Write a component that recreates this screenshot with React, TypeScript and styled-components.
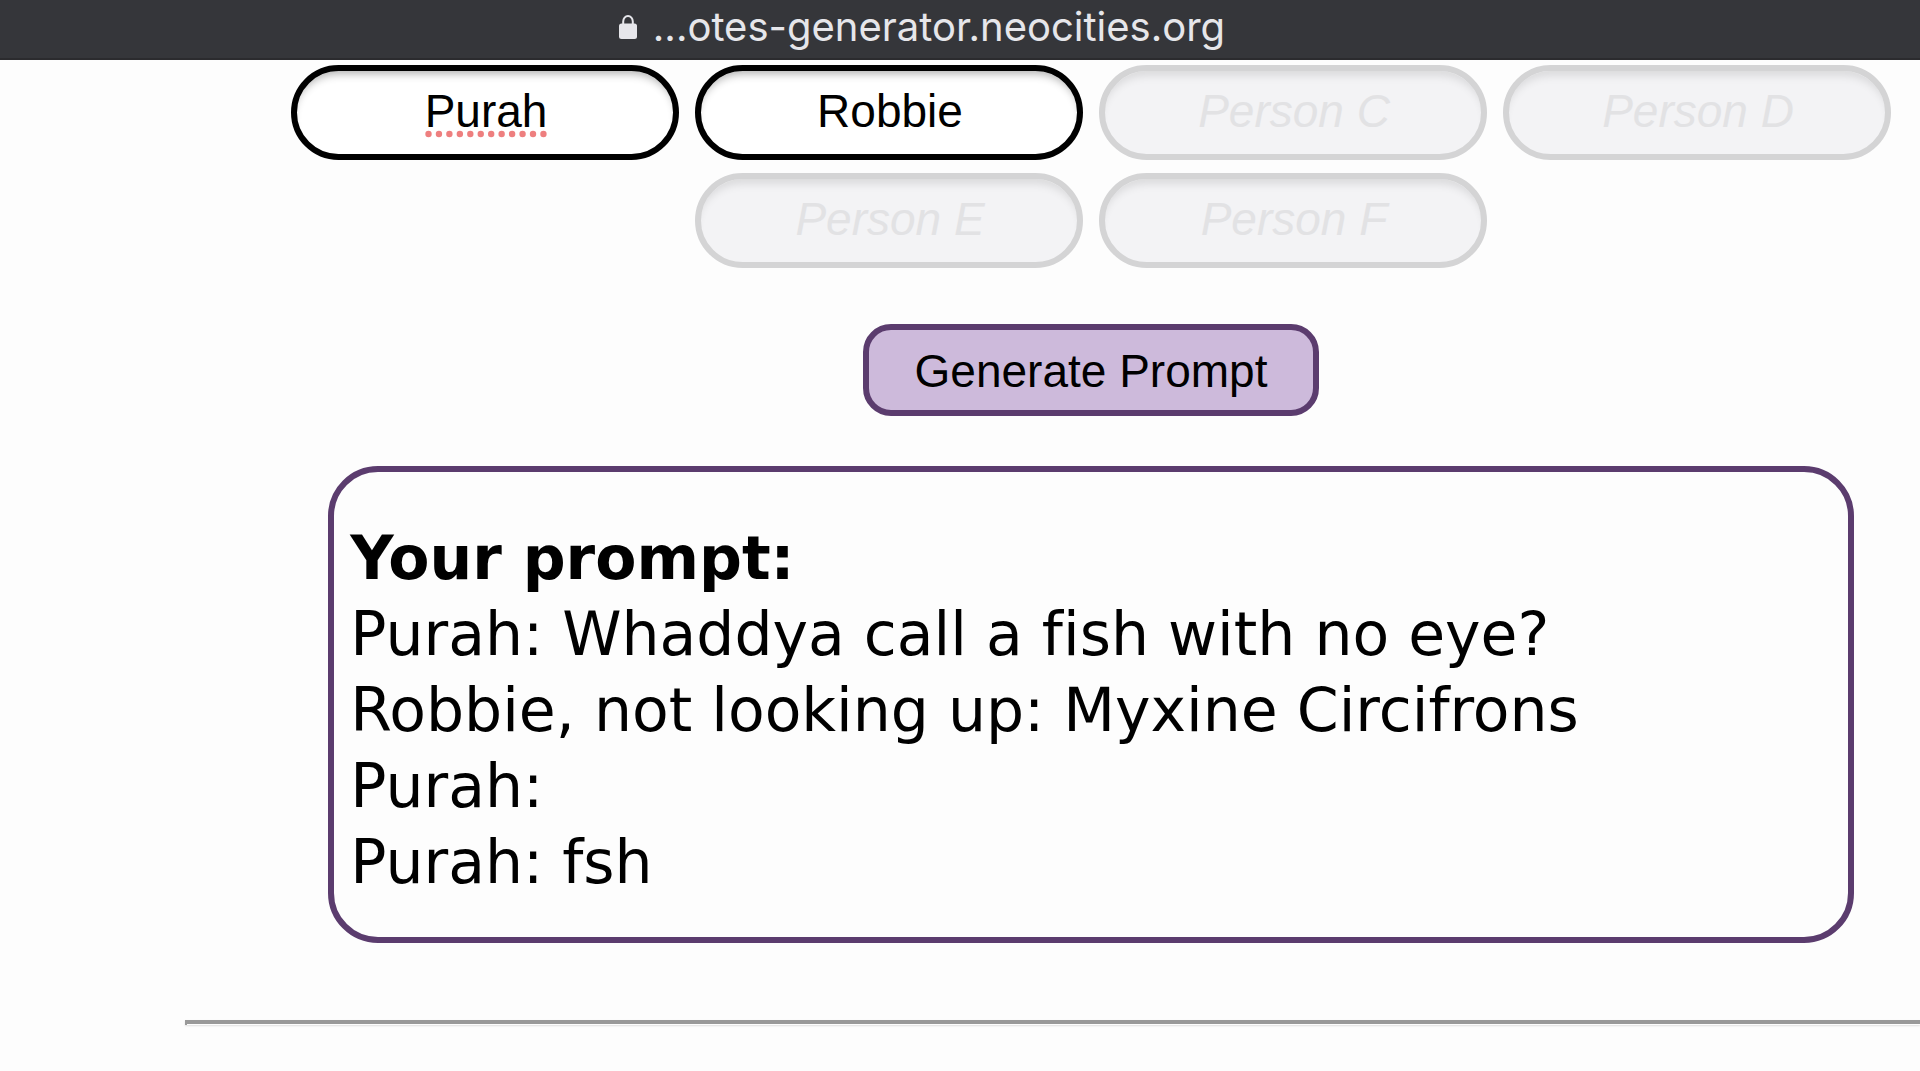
import React, { useState } from "react";
import styled, { createGlobalStyle } from "styled-components";

const GlobalStyle = createGlobalStyle`
  * { box-sizing: border-box; }
  body {
    margin: 0;
    background: #fdfdfd;
    color: #000;
    overflow-x: hidden;
  }
`;

const AddressBar = styled.header`
  display: flex;
  align-items: center;
  justify-content: center;
  gap: 15px;
  height: 60px;
  padding: 0 77px 5px 0;
  background: #35363a;
  border-bottom: 2px solid #2b2b2e;
  color: #e6e6ea;
  font: 400 40px/54px Inter, "Liberation Sans", sans-serif;
`;

const LockIcon = styled.svg`
  width: 20px;
  height: 26px;
  fill: #e6e6ea;
`;

const Content = styled.main`
  display: flex;
  flex-direction: column;
  align-items: center;
  padding: 5px 0 0 262px;
`;

const People = styled.form`
  display: flex;
  flex-wrap: wrap;
  justify-content: center;
  gap: 13px 16px;
`;

const Field = styled.label`
  position: relative;
  display: block;
  width: 388px;
`;

const NameInput = styled.input`
  display: block;
  width: 100%;
  height: 95px;
  padding: 0 20px 4px 22px;
  border: 6px solid #000;
  border-radius: 48px;
  background: #fff;
  box-shadow: inset 0 8px 8px -5px rgba(0, 0, 0, 0.3);
  color: #000;
  font: 400 46px "Liberation Sans", Arial, sans-serif;
  text-align: center;
  outline: none;

  &::placeholder {
    color: #e2e2e4;
    font-style: italic;
    opacity: 1;
  }

  &:placeholder-shown {
    border-color: #d4d4d5;
    background: #f3f3f5;
    box-shadow: inset 0 10px 9px -5px rgba(0, 0, 0, 0.1);
  }
`;

const SpellingDots = styled.svg`
  position: absolute;
  bottom: 22px;
  left: 50%;
  width: 122px;
  height: 8px;
  margin-left: -60px;
  fill: #ee7f7f;
  pointer-events: none;
`;

const GenerateButton = styled.button`
  height: 92px;
  margin-top: 56px;
  padding: 2px 46px 0;
  border: 6px solid #5b3c6e;
  border-radius: 28px;
  background: #cdbadb;
  color: #000;
  font: 400 46px "Liberation Sans", Arial, sans-serif;
`;

const Panel = styled.section`
  width: 92%;
  margin-top: 50px;
  padding: 48px 16px 37px;
  border: 6px solid #5b3c6e;
  border-radius: 50px;
  font: 400 60px/76px "DejaVu Sans", Verdana, sans-serif;
  font-variant-ligatures: none;
`;

const PanelTitle = styled.h2`
  margin: 0;
  font-size: 60px;
  line-height: 76px;
  font-weight: 700;
`;

const Line = styled.p`
  margin: 0;
`;

const Divider = styled.hr`
  height: 5px;
  margin: 77px 0 46px 185px;
  border: solid #999;
  border-width: 4px 0 0 2px;
  box-shadow: 0 1px 2px rgba(0, 0, 0, 0.12);
`;

const people = ["A", "B", "C", "D", "E", "F"];

const promptLines = [
  "Purah: Whaddya call a fish with no eye?",
  "Robbie, not looking up: Myxine Circifrons",
  "Purah:",
  "Purah: fsh",
];

export default function App() {
  const [names, setNames] = useState(["Purah", "Robbie", "", "", "", ""]);

  const rename = (index: number, value: string) =>
    setNames(names.map((name, i) => (i === index ? value : name)));

  return (
    <>
      <GlobalStyle />
      <AddressBar>
        <LockIcon viewBox="0 0 20 26" aria-hidden="true">
          <path d="M5.2 12V7.5a4.8 5.5 0 0 1 9.6 0V12" fill="none" stroke="#e6e6ea" strokeWidth="2" />
          <rect x="1" y="9.5" width="18" height="15.5" rx="2.5" />
        </LockIcon>
        <span>...otes-generator.neocities.org</span>
      </AddressBar>
      <Content>
        <People>
          {people.map((letter, i) => (
            <Field key={letter}>
              <NameInput
                aria-label={`Person ${letter}`}
                placeholder={`Person ${letter}`}
                value={names[i]}
                spellCheck={false}
                onChange={(e) => rename(i, e.target.value)}
              />
              {names[i] === "Purah" && (
                <SpellingDots viewBox="0 0 122 8" aria-hidden="true">
                  {Array.from({ length: 12 }, (_, n) => (
                    <circle key={n} cx={3.5 + n * 10.45} cy="4" r="3.2" />
                  ))}
                </SpellingDots>
              )}
            </Field>
          ))}
        </People>
        <GenerateButton type="button">Generate Prompt</GenerateButton>
        <Panel>
          <PanelTitle>Your prompt:</PanelTitle>
          {promptLines.map((line) => (
            <Line key={line}>{line}</Line>
          ))}
        </Panel>
      </Content>
      <Divider />
    </>
  );
}
